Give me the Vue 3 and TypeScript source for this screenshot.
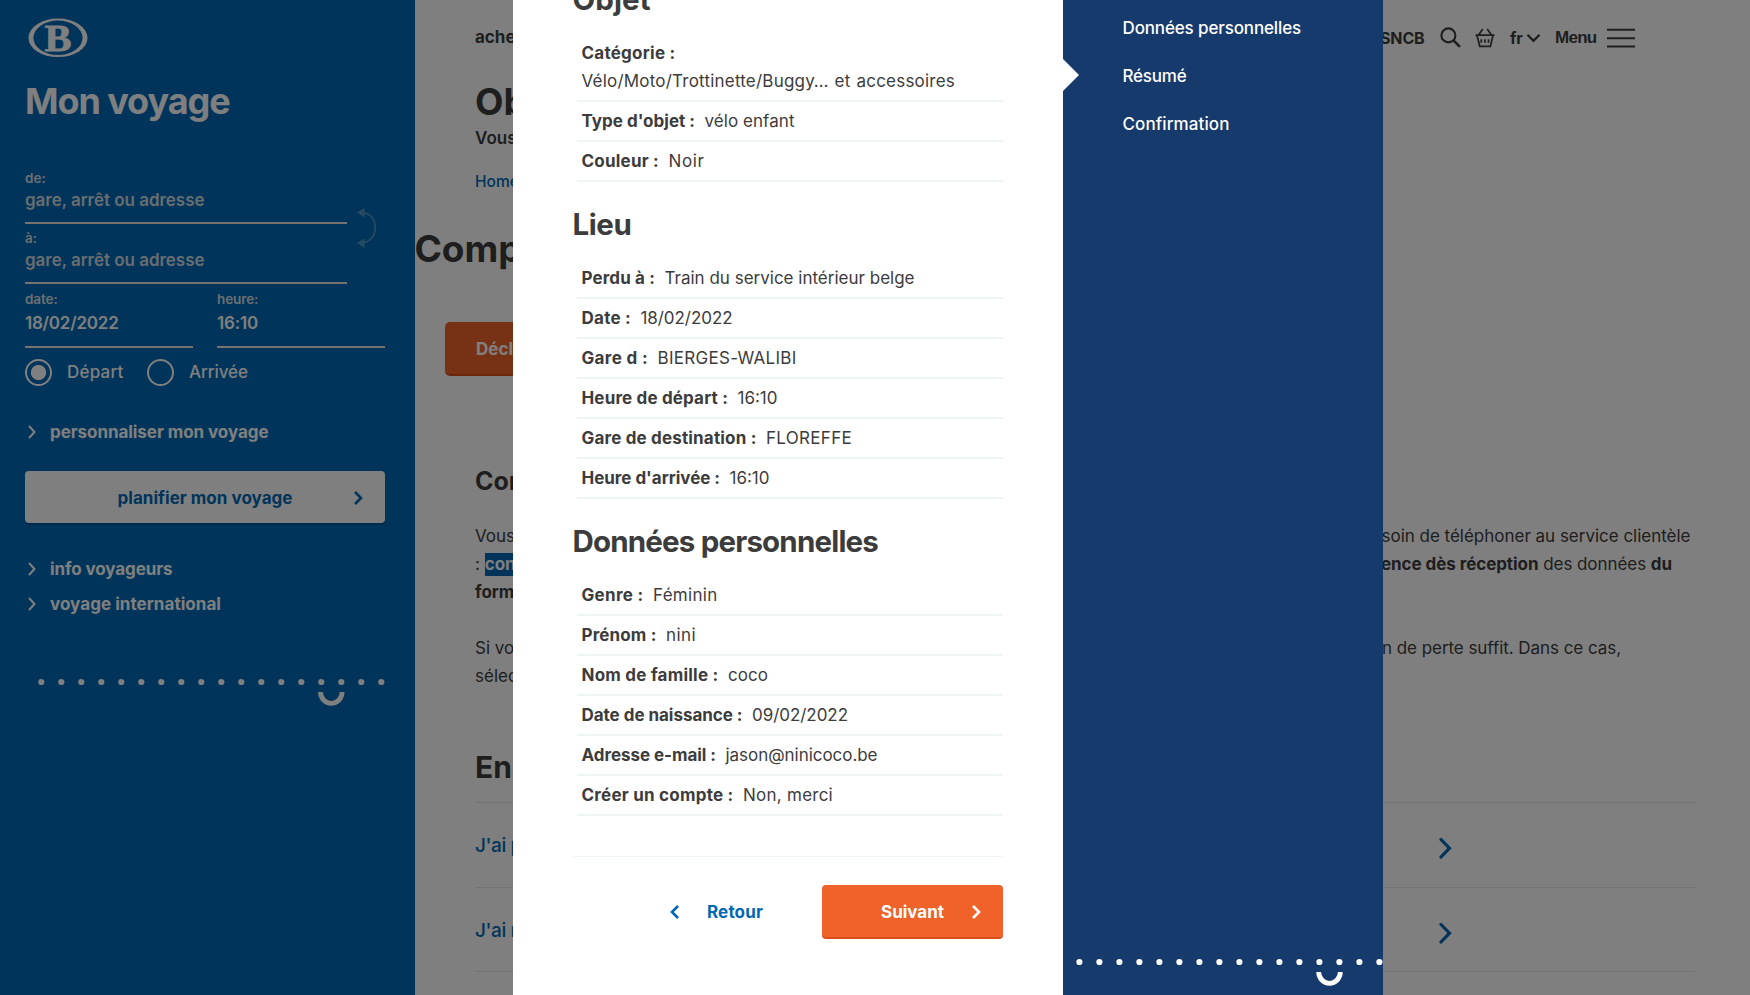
<script setup lang="ts">
import type { Directive } from 'vue'

interface Row { label: string; lw: number; value: string; vw: number; stacked?: boolean }
interface Section { title: string; w: number; rows: Row[] }

// Tracks a run of text so that it occupies the given width.
const vFit: Directive<HTMLElement, number> = {
  mounted(el, binding) {
    const count = (el.textContent ?? '').trim().length
    const natural = el.getBoundingClientRect().width
    if (count > 1) el.style.letterSpacing = `${(binding.value - natural) / count}px`
  },
}

const sections: Section[] = [
  {
    title: 'Objet', w: 78,
    rows: [
      { label: 'Catégorie :', lw: 94, value: 'Vélo/Moto/Trottinette/Buggy… et accessoires', vw: 373.5, stacked: true },
      { label: "Type d'objet :", lw: 113.5, value: 'vélo enfant', vw: 90 },
      { label: 'Couleur :', lw: 77.5, value: 'Noir', vw: 36 },
    ],
  },
  {
    title: 'Lieu', w: 59,
    rows: [
      { label: 'Perdu à :', lw: 73.5, value: 'Train du service intérieur belge', vw: 250 },
      { label: 'Date :', lw: 49.5, value: '18/02/2022', vw: 92 },
      { label: 'Gare d :', lw: 66.5, value: 'BIERGES-WALIBI', vw: 139 },
      { label: 'Heure de départ :', lw: 146.5, value: '16:10', vw: 40 },
      { label: 'Gare de destination :', lw: 175, value: 'FLOREFFE', vw: 86 },
      { label: "Heure d'arrivée :", lw: 138.5, value: '16:10', vw: 40 },
    ],
  },
  {
    title: 'Données personnelles', w: 305.5,
    rows: [
      { label: 'Genre :', lw: 62, value: 'Féminin', vw: 64.5 },
      { label: 'Prénom :', lw: 75, value: 'nini', vw: 30 },
      { label: 'Nom de famille :', lw: 137, value: 'coco', vw: 40 },
      { label: 'Date de naissance :', lw: 161, value: '09/02/2022', vw: 96 },
      { label: 'Adresse e-mail :', lw: 134.5, value: 'jason@ninicoco.be', vw: 152 },
      { label: 'Créer un compte :', lw: 152, value: 'Non, merci', vw: 90 },
    ],
  },
]

const steps = [
  { text: 'Données personnelles', w: 178.5 },
  { text: 'Résumé', w: 64 },
  { text: 'Confirmation', w: 107 },
]
const links = [
  { text: 'info voyageurs', w: 122.5 },
  { text: 'voyage international', w: 171 },
]
</script>

<template>
  <div class="page">
    <aside class="sidebar">
      <svg class="logo" width="66" height="42" viewBox="0 0 66 42">
        <path fill-rule="evenodd" d="M33 1.5a29.5 19.3 0 1 0 0 38.6a29.5 19.3 0 1 0 0-38.6ZM33 3.6a24.6 17.2 0 1 1 0 34.4a24.6 17.2 0 1 1 0-34.4Z" />
        <text x="19.5" y="33.6" textLength="27" lengthAdjust="spacingAndGlyphs">B</text>
      </svg>
      <h1 class="side-title"><span v-fit="204.5">Mon voyage</span></h1>
      <div class="route">
        <div class="fields">
          <div class="field"><label>de:</label><div class="ph"><span v-fit="179.5">gare, arrêt ou adresse</span></div></div>
          <div class="field"><label>à:</label><div class="ph"><span v-fit="179.5">gare, arrêt ou adresse</span></div></div>
        </div>
        <svg class="swap" width="22" height="40" viewBox="0 0 22 40">
          <path d="M5 4.5C13 5 18.3 11 18.3 19.5S13 34 5 35" fill="none" stroke="currentColor" stroke-width="1.7" />
          <path d="M0 4.5 7.5 0v9.5ZM0 35l7.5-4.5V40Z" fill="currentColor" />
        </svg>
      </div>
      <div class="when">
        <div class="field date"><label>date:</label><div class="val"><span v-fit="93.5">18/02/2022</span></div></div>
        <div class="field date"><label>heure:</label><div class="val"><span v-fit="41">16:10</span></div></div>
      </div>
      <div class="radios">
        <i class="radio on"></i><span class="r1"><span v-fit="56.5">Départ</span></span>
        <i class="radio"></i><span class="r2"><span v-fit="59">Arrivée</span></span>
      </div>
      <div class="link custom">
        <svg width="8" height="14" viewBox="0 0 8 14"><path d="m1 1 5.5 6L1 13" /></svg>
        <span v-fit="218.5">personnaliser mon voyage</span>
      </div>
      <div class="plan">
        <span v-fit="175">planifier mon voyage</span>
        <svg width="11" height="16" viewBox="0 0 11 16"><path d="m2 2 6 6-6 6" /></svg>
      </div>
      <div v-for="l in links" :key="l.text" class="link">
        <svg width="8" height="14" viewBox="0 0 8 14"><path d="m1 1 5.5 6L1 13" /></svg>
        <span v-fit="l.w">{{ l.text }}</span>
      </div>
      <svg class="dots" width="350" height="34" viewBox="0 0 350 34">
        <circle v-for="n in 18" :key="n" :cx="6.3 + (n - 1) * 20" cy="5" r="3.1" />
        <path d="M285.5 15a10.8 11.3 0 0 0 21.6 0" />
      </svg>
    </aside>

    <main class="main">
      <header class="top">
        <span>ache</span>
        <div class="tools">
          <span class="sncb"><span v-fit="44.5">SNCB</span></span>
          <svg class="search" width="22" height="22" viewBox="0 0 22 22"><circle cx="8.4" cy="8.4" r="7" /><path d="m13.5 13.5 6.5 6.3" stroke-width="2.5" /></svg>
          <svg class="basket" width="22" height="22" viewBox="0 0 22 22"><path d="M1.5 8.2h19M3 8.5l2.8 10.8h10.6L19 8.5M4.5 8 8.8 2M17.5 8l-4.3-6M7.3 12.2v3.6M10.9 12.2v3.6M14.5 12.2v3.6" /></svg>
          <span class="fr">fr</span>
          <svg class="down" width="15" height="10" viewBox="0 0 15 10"><path d="m1.5 1.8 6 6 6-6" /></svg>
          <span class="menu"><span v-fit="41.5">Menu</span></span>
          <svg class="burger" width="28" height="20" viewBox="0 0 28 20"><path d="M0 1.7h28M0 10.2h28M0 18.6h28" /></svg>
        </div>
      </header>
      <h1 class="h1">Ob</h1>
      <p class="lead">Vous</p>
      <p class="crumb">Home</p>
      <h1 class="h1 full">Comp</h1>
      <div class="declare">Décl</div>
      <h3 class="h3">Con</h3>
      <div class="copy">
        <p><span>Vous</span><span><span v-fit="309">soin de téléphoner au service clientèle</span></span></p>
        <p class="l2"><span>: <mark>con</mark></span><span><span v-fit="291"><b>ence dès réception</b> des données <b>du</b></span></span></p>
        <p><b>form</b></p>
        <p class="gap l4"><span>Si vo</span><span><span v-fit="239">n de perte suffit. Dans ce cas,</span></span></p>
        <p><span>sélec</span></p>
      </div>
      <h2 class="h2">En</h2>
      <div v-for="q in ['J\'ai p', 'J\'ai r']" :key="q" class="faq">
        <span>{{ q }}</span>
        <svg width="14" height="22" viewBox="0 0 14 22"><path d="m2 2.5 8.5 8.7L2 20" /></svg>
      </div>
      <div class="faq"></div>
    </main>

    <div class="shade"></div>

    <div class="modal">
      <div class="body">
        <section v-for="s in sections" :key="s.title">
          <h2><span v-fit="s.w">{{ s.title }}</span></h2>
          <div v-for="r in s.rows" :key="r.label" class="row" :class="{ stacked: r.stacked }">
            <b><span v-fit="r.lw">{{ r.label }}</span></b><span class="value"><span v-fit="r.vw">{{ r.value }}</span></span>
          </div>
        </section>
        <footer>
          <div class="back">
            <svg width="11" height="16" viewBox="0 0 11 16"><path d="M9 2 3 8l6 6" /></svg>
            <span v-fit="56">Retour</span>
          </div>
          <div class="next">
            <span v-fit="63">Suivant</span>
            <svg width="11" height="16" viewBox="0 0 11 16"><path d="m2 2 6 6-6 6" /></svg>
          </div>
        </footer>
      </div>
      <nav>
        <div v-for="st in steps" :key="st.text" class="step"><span v-fit="st.w">{{ st.text }}</span></div>
        <i class="pointer"></i>
        <svg class="ndots" width="320" height="34" viewBox="0 0 320 34">
          <circle v-for="n in 16" :key="n" :cx="16.4 + (n - 1) * 20" cy="5" r="3.1" />
          <path d="M255.7 15a10.8 11.3 0 0 0 21.6 0" />
        </svg>
      </nav>
    </div>
  </div>
</template>

<style>
body { margin: 0; overflow: hidden; }
</style>

<style scoped>
.page { position: relative; display: flex; width: 1750px; height: 995px; overflow: hidden; background: #fff; color: #3c3c3c; font: 400 17px/28px Inter, "Liberation Sans", sans-serif; }
h1, h2, h3, p { margin: 0; }
span { white-space: nowrap; }
svg { display: block; flex: none; fill: none; stroke: currentColor; }

.sidebar { box-sizing: border-box; width: 415px; height: 995px; flex: none; padding: 17px 25px 0; background: #0069b4; color: #fff; }
.logo { margin-left: -.5px; fill: #fff; stroke: none; height: 42px; }
.logo text { font: 700 38px "Liberation Serif", serif; stroke: #fff; stroke-width: .8px; }
.side-title { margin-top: 20px; font-size: 36px; line-height: 44px; font-weight: 700; }
.route { display: flex; margin-top: 41px; }
.fields { width: 322px; }
.field { box-sizing: border-box; height: 60px; padding-top: 6px; border-bottom: 2px solid #ede5e0; }
.field label { display: block; font-size: 13.5px; line-height: 16px; font-weight: 600; color: #d4dfe6; }
.date label { margin-top: -1px; letter-spacing: -.1px; }
.ph { line-height: 28px; font-weight: 600; color: #d0dbe3; }
.swap { margin: 44px 0 0 10px; color: #4d96c4; }
.swap path:last-child { stroke: none; }
.when { display: flex; gap: 24px; }
.date { width: 168px; height: 64px; padding-top: 8px; }
.val { margin-top: 2px; line-height: 28px; font-weight: 600; }
.radios { display: flex; align-items: center; margin-top: 11px; height: 27px; font-weight: 500; }
.radio { box-sizing: border-box; width: 27px; height: 27px; margin-right: 15px; border: 2px solid #fff; border-radius: 50%; }
.radio.on { background: radial-gradient(circle, #fff 7.2px, transparent 8px); }
.r1 { width: 80px; }
.r1, .r2 { padding-bottom: 1px; line-height: 26px; }
.link { display: flex; align-items: center; gap: 14px; height: 35px; padding-left: 3px; font-weight: 700; }
.link svg { stroke-width: 2; }
.link.custom { height: 26px; margin-top: 33px; }
.plan { box-sizing: border-box; display: flex; align-items: center; justify-content: space-between; height: 52px; margin: 26px 0 28px; width: 360px; padding: 2px 21px 0 92.5px; border-radius: 4px; background: #fff; color: #0069b4; font-weight: 700; box-shadow: 0 2px 0 #005593; }
.plan svg, .back svg, .next svg { stroke-width: 2.6; }
.dots { margin: 56px 0 0 10px; }
.dots circle, .ndots circle { fill: #fff; stroke: none; }
.dots path, .ndots path { stroke: #fff; stroke-width: 4.8; }

.main { flex: 1; padding-left: 60px; min-width: 0; }
.top { display: flex; justify-content: space-between; height: 79px; line-height: 74px; font-weight: 700; }
.tools { display: flex; align-items: center; height: 76px; width: 370px; font-size: 16px; }
.sncb { width: 44px; margin-right: 15.5px; font-weight: 700; line-height: 78px; }
.search { stroke-width: 2.1; margin-right: 12.5px; }
.basket { stroke-width: 1.7; margin-right: 14px; }
.fr { width: 16px; font-weight: 700; }
.down { stroke-width: 2.3; margin-right: 14px; }
.menu { width: 52px; font: 700 17px/20px "Liberation Sans", sans-serif; padding-bottom: 1px; }
.burger { stroke-width: 2; }
.h1 { font-size: 37px; line-height: 45px; height: 44px; font-weight: 700; white-space: nowrap; }
.full { margin: 32px 0 0 -60.5px; line-height: 46px; }
.lead { margin-top: 2px; line-height: 26px; font-weight: 600; }
.crumb { margin-top: 19px; font-size: 15.5px; line-height: 24px; font-weight: 500; color: #0069b4; }
.declare { box-sizing: border-box; width: 300px; height: 54px; margin: 52px 0 0 -30px; padding-left: 31px; border-bottom: 2px solid #d94c14; border-radius: 5px; background: #ef6229; color: #fff; font-weight: 700; line-height: 54px; }
.h3 { margin-top: 87px; font-size: 25px; line-height: 36px; }
.copy { margin-top: 23px; }
.copy p { display: flex; justify-content: space-between; width: 1215.5px; height: 28px; }
.copy .l2 { width: 1197px; }
.copy .l4 { width: 1146px; }
.copy .gap { margin-top: 28px; }
.copy b, .copy mark { font-weight: 700; }
.copy mark { display: inline-block; line-height: 23px; background: #0069b4; color: #fff; }
.h2 { margin: 57px 0 15px; font-size: 30px; line-height: 40px; }
.faq { box-sizing: border-box; display: flex; justify-content: space-between; width: 1220px; height: 84.6px; padding: 29px 242px 0 0; border-top: 1px solid #e7ebeb; color: #0069b4; font-size: 19px; font-weight: 500; letter-spacing: -.4px; }
.faq svg { stroke-width: 3.2; margin-top: 5px; stroke-linecap: round; }

.shade { position: absolute; inset: 0; background: rgba(0, 0, 0, .5); }

.modal { position: absolute; left: 513px; top: 0; display: flex; width: 870px; height: 995px; overflow: hidden; background: #fff; }
.body { width: 430px; padding: 0 60px; margin-top: -43px; }
.body h2 { box-sizing: border-box; height: 77px; padding-top: 22px; font-size: 29.5px; line-height: 40px; font-weight: 700; }
.body h2 span { margin-left: -.5px; }
.row { display: flex; box-sizing: border-box; height: 40px; margin-left: 4px; padding: 5px 4px 5px 4.5px; border-bottom: 2px solid #eff4f5; }
.row.stacked { flex-direction: column; height: 68px; }
.row b { font-weight: 700; }
.value { margin-left: 9.5px; }
.stacked .value { margin-left: 0; word-spacing: 1px; }
footer { display: flex; justify-content: flex-end; margin-top: 40px; padding-top: 28px; border-top: 1px solid #eff4f5; line-height: 54px; font-weight: 700; }
.back { display: flex; align-items: center; gap: 27px; width: 153px; color: #0069b4; }
.next { box-sizing: border-box; display: flex; align-items: center; justify-content: space-between; width: 181px; height: 54px; padding: 2px 21px 0 59px; border-radius: 4px; border-bottom: 2px solid #d94d19; background: #ef6229; color: #fff; }
nav { position: relative; box-sizing: border-box; width: 320px; height: 995px; padding: 4px 0 0 59.5px; background: #163a6c; color: #fff; font-weight: 500; }
.step { height: 48px; line-height: 49px; }
.pointer { position: absolute; left: 0; top: 59px; border: 16px solid transparent; border-left-color: #fff; border-right-width: 0; }
.ndots { position: absolute; left: 0; top: 957px; }
</style>
